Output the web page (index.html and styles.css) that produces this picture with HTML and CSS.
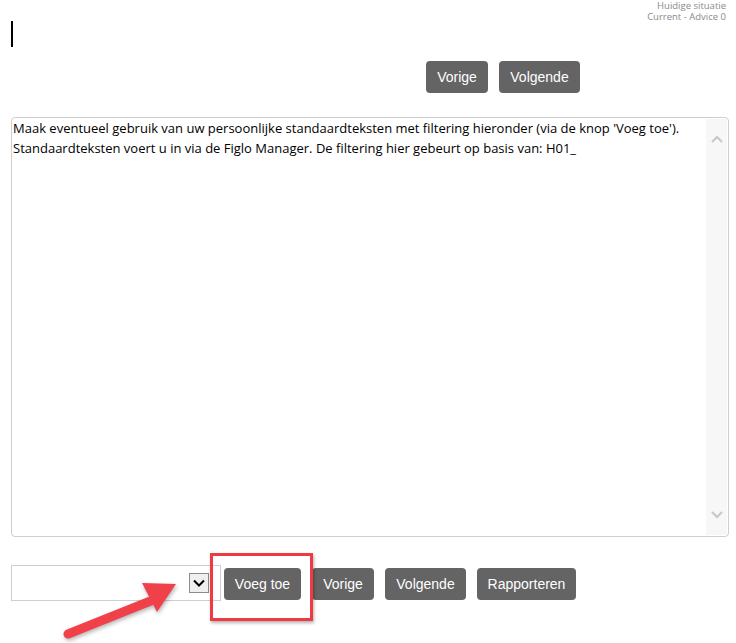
FILE: index.html
```html
<!DOCTYPE html>
<html lang="en">
<head>
    <meta charset="UTF-8">
    <title>Standaardteksten</title>
    <link rel="stylesheet" href="styles.css">
</head>
<body>
    <div class="status">
        <div>Huidige situatie</div>
        <div>Current - Advice 0</div>
    </div>

    <div class="caret"></div>

    <div class="nav-top">
        <button class="btn btn-vorige">Vorige</button>
        <button class="btn btn-volgende">Volgende</button>
    </div>

    <div class="memo">
        <div class="memo-text">Maak eventueel gebruik van uw persoonlijke standaardteksten met filtering hieronder (via de knop 'Voeg toe').<br>Standaardteksten voert u in via de Figlo Manager. De filtering hier gebeurt op basis van: H01_</div>
        <div class="scrollbar">
            <svg width="14" height="10" viewBox="0 0 14 10"><path d="M2 8 L7 3 L12 8" fill="none" stroke="#c8c8c8" stroke-width="2.2"/></svg>
            <svg width="14" height="10" viewBox="0 0 14 10"><path d="M2 2 L7 7 L12 2" fill="none" stroke="#c8c8c8" stroke-width="2.2"/></svg>
        </div>
    </div>

    <div class="actions">
        <div class="select">
            <span class="select-arrow">
                <svg width="14" height="10" viewBox="0 0 14 10"><path d="M2 2.5 L7 7.5 L12 2.5" fill="none" stroke="#000" stroke-width="2"/></svg>
            </span>
        </div>
        <button class="btn btn-voeg">Voeg toe</button>
        <button class="btn btn-vorige">Vorige</button>
        <button class="btn btn-volgende">Volgende</button>
        <button class="btn btn-rapport">Rapporteren</button>

        <!-- annotation: highlight + arrow -->
        <div class="highlight"></div>
        <svg class="pointer" width="200" height="80" viewBox="0 0 200 80">
            <line x1="8" y1="66" x2="98" y2="30" stroke="#f0404a" stroke-width="9" stroke-linecap="round"/>
            <polygon points="116,16 82,15 97,44" fill="#f0404a"/>
        </svg>
    </div>
</body>
</html>
```

FILE: styles.css
```css
body {
    margin: 0;
    font-family: "Liberation Sans", Arial, sans-serif;
    background-color: #fff;
    position: relative;
    height: 643px;
    overflow: hidden;
}

.status {
    height: 21px;
    text-align: right;
    padding: 0 10px 0 0;
    font-family: "Open Sans", sans-serif;
    font-size: 9.5px;
    line-height: 11px;
    color: #8a8a8a;
}

.caret {
    width: 2px;
    height: 26px;
    background-color: #000;
    margin: 0 0 0 11px;
}

.nav-top {
    display: flex;
    gap: 11px;
    padding: 14px 0 0 426px;
}

.btn {
    height: 32px;
    margin-top: 3px;
    border: none;
    border-radius: 4px;
    background-color: #646464;
    color: #fff;
    font-family: "Liberation Sans", Arial, sans-serif;
    font-size: 14px;
    padding: 0;
    cursor: pointer;
}

.nav-top .btn {
    margin-top: 0;
}

.btn-vorige {
    width: 62px;
}

.btn-volgende {
    width: 81px;
}

.btn-voeg {
    width: 77px;
}

.btn-rapport {
    width: 99px;
}

.memo {
    display: flex;
    margin: 24px 0 0 11px;
    width: 718px;
    height: 420px;
    box-sizing: border-box;
    border: 1px solid #cfcfcf;
    border-radius: 4px;
}

.memo-text {
    flex: 1;
    padding: 0 0 0 1px;
    font-family: "Open Sans", sans-serif;
    font-size: 13px;
    line-height: 20px;
    color: #000;
}

.scrollbar {
    width: 21px;
    margin: 1px 1px 1px 0;
    background-color: #f7f7f7;
    display: flex;
    flex-direction: column;
    justify-content: space-between;
    align-items: center;
    padding: 15px 0 15px;
}

.actions {
    display: flex;
    align-items: flex-start;
    gap: 11px;
    margin: 28px 0 0 11px;
}

.select {
    width: 210px;
    height: 36px;
    box-sizing: border-box;
    border: 1px solid #cfcfcf;
    display: flex;
    justify-content: flex-end;
    align-items: center;
    padding-right: 11px;
    margin-right: -8px;
}

.select-arrow {
    width: 20px;
    height: 20px;
    box-sizing: border-box;
    border: 1px solid #8c8c8c;
    background-color: #efefef;
    display: flex;
    justify-content: center;
    align-items: center;
}

.highlight {
    position: absolute;
    left: 210px;
    top: 553px;
    width: 103px;
    height: 68px;
    box-sizing: border-box;
    border: 3px solid #ef3a43;
    box-shadow: 1px 2px 3px rgba(0, 0, 0, 0.3);
}

.pointer {
    position: absolute;
    left: 60px;
    top: 568px;
    filter: drop-shadow(1px 2px 2px rgba(0, 0, 0, 0.3));
}
```
